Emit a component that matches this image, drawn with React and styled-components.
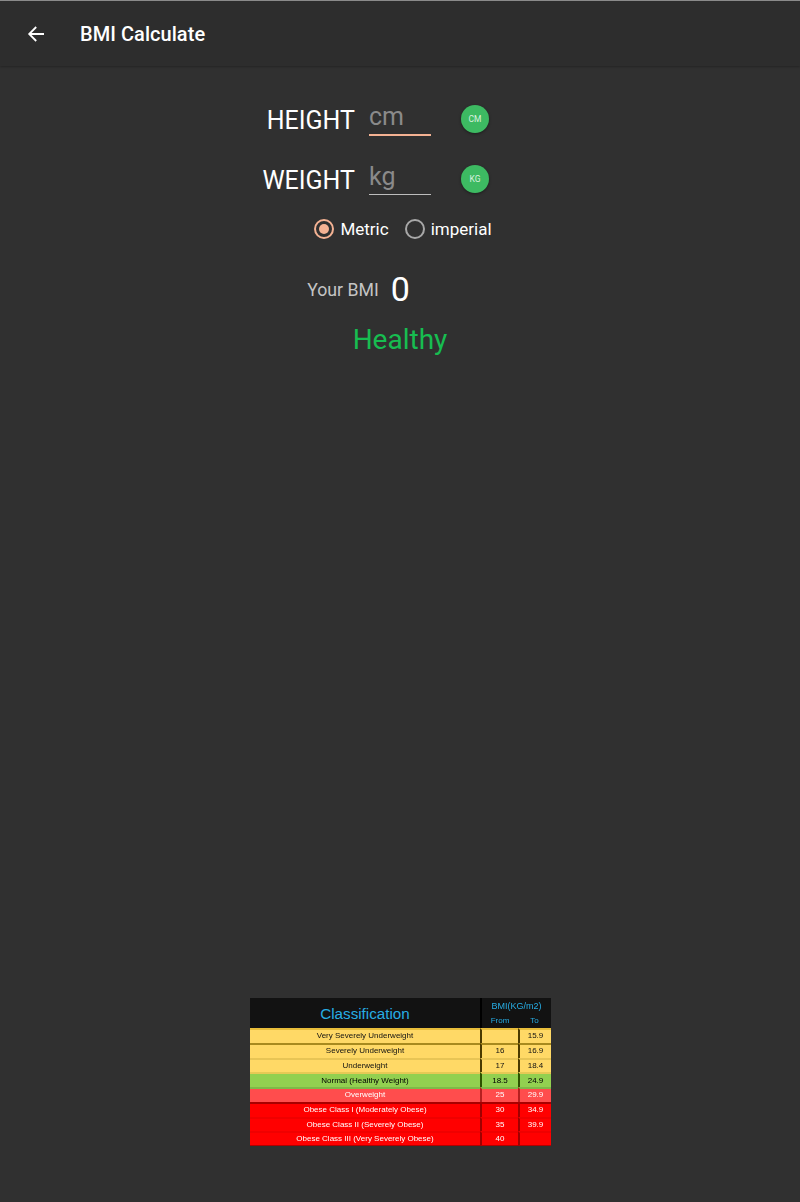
import React from "react";
import styled, { createGlobalStyle } from "styled-components";

const Global = createGlobalStyle`
  html, body { margin: 0; padding: 0; background: #303030; }
  body { font-family: Roboto, "Liberation Sans", sans-serif; }
`;

const Page = styled.div`
  width: 800px;
  height: 1202px;
  display: flex;
  flex-direction: column;
  background: #303030;
  overflow: hidden;
`;

const Header = styled.header`
  height: 65px;
  flex: none;
  display: flex;
  align-items: center;
  background: #2d2d2d;
  border-top: 1px solid #8a8a8a;
  box-shadow: 0 1px 2px rgba(0, 0, 0, 0.25);
`;

const BackButton = styled.div`
  width: 24px;
  height: 24px;
  margin: 0 32px 0 24px;
  color: #fff;
`;

const Title = styled.h1`
  margin: 0;
  font-size: 20px;
  font-weight: 500;
  letter-spacing: 0.05px;
  color: #fff;
  line-height: 24px;
`;

const Main = styled.main`
  flex: 1;
  display: flex;
  flex-direction: column;
  align-items: stretch;
  padding-top: 24px;
  padding-bottom: 56px;
`;

const FieldRow = styled.div`
  display: grid;
  grid-template-columns: 1fr 62px 1fr;
  align-items: center;
  height: 60px;
`;

const FieldLabel = styled.label`
  justify-self: end;
  margin: ${(p) => p.$nudge}px 14px 0 0;
  font-size: 25px;
  color: #fff;
  line-height: 30px;
`;

const InputBox = styled.div`
  height: ${(p) => (p.$focused ? 36 : 35)}px;
  box-sizing: border-box;
  border-bottom: ${(p) => (p.$focused ? "2px solid #f4b293" : "1px solid #bdbdbd")};
  font-size: 25px;
  line-height: 34px;
  color: #8a8a8a;
  margin-top: -5px;
`;

const UnitBadge = styled.div`
  justify-self: start;
  margin: -2px 0 0 30px;
  width: 28px;
  height: 28px;
  border-radius: 50%;
  background: #3dba62;
  box-shadow: 0 1px 3px rgba(0, 0, 0, 0.4);
  color: #d8f0df;
  font-size: 8.5px;
  display: flex;
  align-items: center;
  justify-content: center;
`;

const RadioRow = styled.div`
  display: flex;
  justify-content: center;
  align-items: center;
  gap: 16px;
  padding-left: 6px;
  height: 24px;
  margin-top: 7px;
`;

const RadioItem = styled.div`
  display: flex;
  align-items: center;
  gap: 6px;
  font-size: 17px;
  color: #fff;
`;

const RadioOuter = styled.span`
  width: 20px;
  height: 20px;
  box-sizing: border-box;
  border-radius: 50%;
  border: 2px solid ${(p) => (p.$on ? "#f4b293" : "#a8a8a8")};
  display: flex;
  align-items: center;
  justify-content: center;
  &::after {
    content: "";
    width: 10px;
    height: 10px;
    border-radius: 50%;
    background: ${(p) => (p.$on ? "#f4b293" : "transparent")};
  }
`;

const ResultRow = styled.div`
  display: flex;
  justify-content: center;
  align-items: center;
  gap: 12px;
  padding-right: 83px;
  margin-top: 28px;
  height: 40px;
`;

const ResultLabel = styled.span`
  font-size: 17.7px;
  color: #c4c4c4;
  margin-top: 2px;
`;

const ResultValue = styled.span`
  font-size: 34px;
  color: #fff;
`;

const Status = styled.div`
  margin-top: 11px;
  text-align: center;
  font-size: 28px;
  line-height: 40px;
  color: #17bd50;
`;

const Chart = styled.table`
  margin: auto 249px 0 250px;
  width: 301px;
  height: 148px;
  table-layout: fixed;
  border-collapse: separate;
  border-spacing: 0;
  font-family: "Liberation Sans", Arial, sans-serif;
  filter: blur(0.6px);
`;

const HeadCell = styled.th`
  background: #121212;
  color: #27ade4;
  padding: 0;
  height: 15px;
  overflow: hidden;
  font-size: ${(p) => p.$size || 8}px;
  font-weight: 400;
  border-left: ${(p) => (p.$line ? "2px solid #000" : "none")};
`;

const Row = styled.tr`
  background: ${(p) => p.$bg};
  color: ${(p) => p.$fg};
`;

const Cell = styled.td`
  box-sizing: border-box;
  padding: 0;
  height: 14.75px;
  text-align: center;
  font-size: 8px;
  line-height: 10px;
  white-space: nowrap;
  overflow: hidden;
  border-top: 2px solid ${(p) => p.$edge};
  border-bottom: ${(p) => (p.$last ? `1px solid #b00000` : "none")};
  border-left: ${(p) => (p.$rule ? `2px solid ${p.$rule}` : "none")};
`;

const rows = [
  ["Very Severely Underweight", "", "15.9", "#ffd966", "#111", "#e8bd3a", "#4a3a00"],
  ["Severely Underweight", "16", "16.9", "#ffd966", "#111", "#a88a1e", "#4a3a00"],
  ["Underweight", "17", "18.4", "#ffd966", "#111", "#e8c555", "#4a3a00"],
  ["Normal (Healthy Weight)", "18.5", "24.9", "#92d050", "#000", "#e6c955", "#2d5200"],
  ["Overweight", "25", "29.9", "#ff4d4d", "#fff", "#7fb848", "#b52020"],
  ["Obese Class I (Moderately Obese)", "30", "34.9", "#ff0000", "#fff", "#a80000", "#a00000"],
  ["Obese Class II (Severely Obese)", "35", "39.9", "#ff0000", "#fff", "#f00000", "#a00000"],
  ["Obese Class III (Very Severely Obese)", "40", "", "#ff0000", "#fff", "#f00000", "#a00000"],
];

export default function App() {
  return (
    <Page>
      <Global />
      <Header>
        <BackButton>
          <svg width="24" height="24" viewBox="0 0 24 24" fill="none" stroke="currentColor" strokeWidth="1.8">
            <path d="M20 12H5.5M12.2 5 5.2 12l7 7" />
          </svg>
        </BackButton>
        <Title>BMI Calculate</Title>
      </Header>
      <Main>
        <FieldRow>
          <FieldLabel $nudge={2}>HEIGHT</FieldLabel>
          <InputBox $focused>cm</InputBox>
          <UnitBadge>CM</UnitBadge>
        </FieldRow>
        <FieldRow>
          <FieldLabel $nudge={1}>WEIGHT</FieldLabel>
          <InputBox>kg</InputBox>
          <UnitBadge>KG</UnitBadge>
        </FieldRow>
        <RadioRow>
          <RadioItem>
            <RadioOuter $on />
            Metric
          </RadioItem>
          <RadioItem>
            <RadioOuter />
            imperial
          </RadioItem>
        </RadioRow>
        <ResultRow>
          <ResultLabel>Your BMI</ResultLabel>
          <ResultValue>0</ResultValue>
        </ResultRow>
        <Status>Healthy</Status>
        <Chart>
          <colgroup>
            <col style={{ width: 230 }} />
            <col style={{ width: 38 }} />
            <col style={{ width: 33 }} />
          </colgroup>
          <thead>
            <tr>
              <HeadCell rowSpan={2} $size={15.2}>Classification</HeadCell>
              <HeadCell colSpan={2} $line $size={9}>BMI(KG/m2)</HeadCell>
            </tr>
            <tr>
              <HeadCell $line>From</HeadCell>
              <HeadCell>To</HeadCell>
            </tr>
          </thead>
          <tbody>
            {rows.map(([name, from, to, bg, fg, edge, rule], i) => (
              <Row key={name} $bg={bg} $fg={fg}>
                <Cell $edge={edge} $last={i === 7}>{name}</Cell>
                <Cell $edge={edge} $rule={rule} $last={i === 7}>{from}</Cell>
                <Cell $edge={edge} $rule={rule} $last={i === 7}>{to}</Cell>
              </Row>
            ))}
          </tbody>
        </Chart>
      </Main>
    </Page>
  );
}
